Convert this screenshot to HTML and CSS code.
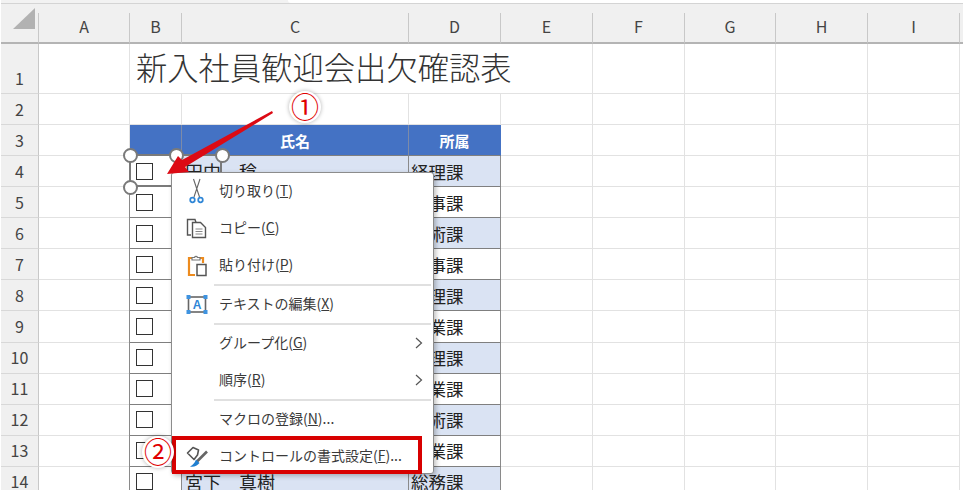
FILE: index.html
```html
<!DOCTYPE html>
<html lang="ja">
<head>
<meta charset="utf-8">
<title>新入社員歓迎会出欠確認表</title>
<link rel="stylesheet" href="styles.css">
</head>
<body>
<div class="page">
  <div class="strip"><div class="tab"></div></div>
  <div class="gap"><div class="corner-tri"></div></div>
  <div class="sheet">
    <div class="ch corner"></div><div class="ch">A</div><div class="ch">B</div><div class="ch">C</div><div class="ch">D</div><div class="ch">E</div><div class="ch">F</div><div class="ch">G</div><div class="ch">H</div><div class="ch">I</div><div class="ch end"></div>

    <div class="rh low">1</div><div class="c"></div><div class="c title">新入社員歓迎会出欠確認表</div><div class="c"></div><div class="c"></div><div class="c"></div><div class="c"></div><div class="fill"></div>

    <div class="rh">2</div><div class="c"></div><div class="c"></div><div class="c"></div><div class="c"></div><div class="c"></div><div class="c"></div><div class="c"></div><div class="c"></div><div class="c"></div><div class="fill"></div>

    <div class="rh">3</div><div class="c"></div><div class="c th th-first"></div><div class="c th">氏名</div><div class="c th th-end">所属</div><div class="c"></div><div class="c"></div><div class="c"></div><div class="c"></div><div class="c"></div><div class="fill"></div>

    <div class="rh">4</div><div class="c"></div><div class="c tb first"><span class="box"></span></div><div class="c tb band name">田中　稔</div><div class="c tb band">経理課</div><div class="c"></div><div class="c"></div><div class="c"></div><div class="c"></div><div class="c"></div><div class="fill"></div>

    <div class="rh">5</div><div class="c"></div><div class="c tb first"><span class="box"></span></div><div class="c tb"></div><div class="c tb">人事課</div><div class="c"></div><div class="c"></div><div class="c"></div><div class="c"></div><div class="c"></div><div class="fill"></div>

    <div class="rh">6</div><div class="c"></div><div class="c tb first"><span class="box"></span></div><div class="c tb band"></div><div class="c tb band">技術課</div><div class="c"></div><div class="c"></div><div class="c"></div><div class="c"></div><div class="c"></div><div class="fill"></div>

    <div class="rh">7</div><div class="c"></div><div class="c tb first"><span class="box"></span></div><div class="c tb"></div><div class="c tb">人事課</div><div class="c"></div><div class="c"></div><div class="c"></div><div class="c"></div><div class="c"></div><div class="fill"></div>

    <div class="rh">8</div><div class="c"></div><div class="c tb first"><span class="box"></span></div><div class="c tb band"></div><div class="c tb band">経理課</div><div class="c"></div><div class="c"></div><div class="c"></div><div class="c"></div><div class="c"></div><div class="fill"></div>

    <div class="rh">9</div><div class="c"></div><div class="c tb first"><span class="box"></span></div><div class="c tb"></div><div class="c tb">営業課</div><div class="c"></div><div class="c"></div><div class="c"></div><div class="c"></div><div class="c"></div><div class="fill"></div>

    <div class="rh">10</div><div class="c"></div><div class="c tb first"><span class="box"></span></div><div class="c tb band"></div><div class="c tb band">経理課</div><div class="c"></div><div class="c"></div><div class="c"></div><div class="c"></div><div class="c"></div><div class="fill"></div>

    <div class="rh">11</div><div class="c"></div><div class="c tb first"><span class="box"></span></div><div class="c tb"></div><div class="c tb">営業課</div><div class="c"></div><div class="c"></div><div class="c"></div><div class="c"></div><div class="c"></div><div class="fill"></div>

    <div class="rh">12</div><div class="c"></div><div class="c tb first"><span class="box"></span></div><div class="c tb band"></div><div class="c tb band">技術課</div><div class="c"></div><div class="c"></div><div class="c"></div><div class="c"></div><div class="c"></div><div class="fill"></div>

    <div class="rh">13</div><div class="c"></div><div class="c tb first"><span class="box"></span></div><div class="c tb"></div><div class="c tb">営業課</div><div class="c"></div><div class="c"></div><div class="c"></div><div class="c"></div><div class="c"></div><div class="fill"></div>

    <div class="rh">14</div><div class="c"></div><div class="c tb first"><span class="box"></span></div><div class="c tb band name">宮下　真樹</div><div class="c tb band">総務課</div><div class="c"></div><div class="c"></div><div class="c"></div><div class="c"></div><div class="c"></div><div class="fill"></div>
  </div>

  <div class="selection">
    <span class="handle h-tl"></span><span class="handle h-tm"></span><span class="handle h-tr"></span><span class="handle h-bl"></span>
  </div>

  <div class="menu">
    <div class="item">
      <span class="ico"><svg viewBox="0 0 24 28" width="24" height="28"><path d="M8.5 1 L14.5 19 M15 1 L9 19" fill="none" stroke="#666" stroke-width="1.1"/><circle cx="7.5" cy="22" r="2.3" fill="none" stroke="#2f86d6" stroke-width="1.7"/><circle cx="15.5" cy="22" r="2.3" fill="none" stroke="#2f86d6" stroke-width="1.7"/></svg></span>
      <span class="label">切り取り(<u>T</u>)</span>
    </div>
    <div class="item">
      <span class="ico"><svg viewBox="0 0 24 22" width="24" height="22"><path d="M6 17 H2.5 V1.5 H10 L11 4.5" fill="none" stroke="#555" stroke-width="1.4"/><path d="M7.5 4.5 H15.5 L20.5 9.5 V19.5 H7.5 Z" fill="#fff" stroke="#555" stroke-width="1.4"/><path d="M10.5 11 H17.5 M10.5 13.5 H17.5 M10.5 16 H17.5" stroke="#888" stroke-width="1"/></svg></span>
      <span class="label">コピー(<u>C</u>)</span>
    </div>
    <div class="item">
      <span class="ico"><svg viewBox="0 0 24 24" width="24" height="24"><path d="M7 4 H4 V21 H10" fill="none" stroke="#ed8b1e" stroke-width="2.2"/><path d="M15 4 H18 V9" fill="none" stroke="#ed8b1e" stroke-width="2.2"/><path d="M7 6 V3.5 H9.5 A1.6 1.6 0 0 1 12.5 3.5 H15 V6 Z" fill="#fff" stroke="#777" stroke-width="1.2"/><rect x="12" y="10.5" width="9" height="11" fill="#fff" stroke="#555" stroke-width="1.5"/></svg></span>
      <span class="label">貼り付け(<u>P</u>)</span>
    </div>
    <div class="sep"></div>
    <div class="item">
      <span class="ico"><svg viewBox="0 0 24 22" width="24" height="22"><rect x="3.5" y="3" width="17" height="15" fill="#fff" stroke="#666" stroke-width="1.6"/><rect x="1.5" y="1" width="4" height="4" fill="#3f93e0"/><rect x="18.5" y="1" width="4" height="4" fill="#3f93e0"/><rect x="1.5" y="16" width="4" height="4" fill="#3f93e0"/><rect x="18.5" y="16" width="4" height="4" fill="#3f93e0"/><text x="12" y="15" class="ico-a">A</text></svg></span>
      <span class="label">テキストの編集(<u>X</u>)</span>
    </div>
    <div class="sep"></div>
    <div class="item">
      <span class="ico"></span>
      <span class="label">グループ化(<u>G</u>)</span>
      <svg class="chev" viewBox="0 0 8 12" width="8" height="12"><path d="M1 1 L6.5 6 L1 11" fill="none" stroke="#555" stroke-width="1.2"/></svg>
    </div>
    <div class="item">
      <span class="ico"></span>
      <span class="label">順序(<u>R</u>)</span>
      <svg class="chev" viewBox="0 0 8 12" width="8" height="12"><path d="M1 1 L6.5 6 L1 11" fill="none" stroke="#555" stroke-width="1.2"/></svg>
    </div>
    <div class="sep"></div>
    <div class="item">
      <span class="ico"></span>
      <span class="label">マクロの登録(<u>N</u>)...</span>
    </div>
    <div class="item">
      <span class="ico"><svg viewBox="0 0 24 22" width="24" height="22"><path d="M2.5 7 L8 1.5 L13.5 4 L12.5 9 L9 13.5 Z" fill="#fff" stroke="#555" stroke-width="1.6" stroke-linejoin="round"/><path d="M22 5.5 L12 15.5" stroke="#666" stroke-width="2.6"/><path d="M11 13.5 L14.5 17 Q11 21.5 5 20.5 Q9.5 18 11 13.5 Z" fill="#1f7fd0"/></svg></span>
      <span class="label">コントロールの書式設定(<u>F</u>)...</span>
    </div>
    <div class="redbox"></div>
  </div>

  <svg class="arrow" viewBox="0 0 963 490" width="963" height="490"><polygon points="272,111 182,160 178,156 167,174 189,172 185,167 273,113" fill="#dc0a14"/></svg>
  <div class="badge b1">①</div>
  <div class="badge b2">②</div>
</div>
</body>
</html>
```

FILE: styles.css
```css
* { box-sizing: border-box; }
html, body { margin: 0; padding: 0; }
body { width: 963px; height: 490px; overflow: hidden; background: #fff; font-family: "Noto Sans CJK JP", "Noto Sans", sans-serif; }

.page { position: relative; width: 963px; height: 490px; overflow: hidden; }

.strip { height: 4px; margin-left: 1px; background: #f2f2f2; border-bottom: 1px solid #d4d4d4; position: relative; }
.tab { position: absolute; left: 287px; right: 0; top: 0; height: 3px; background: #fff; border-radius: 0 0 0 4px; }
.gap { height: 9px; margin-left: 1px; background: #f0f0f0; position: relative; }
.corner-tri { position: absolute; left: 12px; top: 4px; width: 22px; height: 21px; background: #b2b2b2; clip-path: polygon(100% 0, 100% 100%, 0 100%); z-index: 1; }

.sheet {
  display: grid;
  margin-left: 1px;
  grid-template-columns: 38px 91px 52px 227px 92px 92px 92px 91px 92px 92px 3px;
  grid-template-rows: 31px 50px 31px 31px repeat(11, 31.1px);
}

.ch { background: #f0f0f0; border-right: 1px solid #c8c8c8; border-bottom: 2px solid #b4b4b4; display: flex; align-items: center; justify-content: center; font-size: 16px; color: #444; padding-bottom: 4px; }
.ch.end { border-right: 0; }
.rh { background: #f0f0f0; border-right: 1px solid #c8c8c8; border-bottom: 1px solid #d8d8d8; display: flex; align-items: center; justify-content: center; font-size: 16px; color: #444; padding-bottom: 1px; }
.rh.low { align-items: flex-end; padding-bottom: 3px; }

.c { border-right: 1px solid #e2e2e2; border-bottom: 1px solid #e2e2e2; min-width: 0; white-space: nowrap; font-size: 17.5px; color: #222; display: flex; align-items: center; }
.fill { background: #fff; }

.title { grid-column: span 4; font-size: 31.3px; padding-left: 6px; padding-bottom: 4px; color: #333; font-weight: 300; }

.th { background: #4472c4; color: #fff; font-weight: 700; font-size: 15px; justify-content: center; border-right: 1px solid #7d8ba8; border-bottom-color: #7f7f7f; }
.th-end { border-right-color: #4472c4; }

.tb { border-right: 1px solid #8a8a8a; border-bottom: 1px solid #7f7f7f; padding-left: 2px; }
.tb.first { box-shadow: -1px 0 0 #8a8a8a; }
.tb.band { background: #dae3f3; }
.name { padding-left: 3px; font-size: 18px; }

.box { display: block; width: 17px; height: 17px; margin-left: 4px; border: 1.5px solid #333; background: #fff; }

.selection { position: absolute; left: 129px; top: 154px; width: 93px; height: 33px; border: 2px solid #7a7a7a; }
.handle { position: absolute; width: 15px; height: 15px; border-radius: 50%; background: #fff; border: 2.5px solid #7a7a7a; }
.h-tl { left: -8px; top: -8px; }
.h-tm { left: 38px; top: -8px; }
.h-tr { left: 84px; top: -8px; }
.h-bl { left: -8px; top: 24px; }

.menu { position: absolute; left: 171px; top: 172px; width: 263px; height: 302px; background: #fff; border: 1px solid #8c8c8c; border-radius: 3px; box-shadow: 2px 2px 5px rgba(0,0,0,.25); }
.item { display: flex; align-items: center; height: 37px; color: #3a3a3a; font-size: 14px; position: relative; }
.ico { width: 47px; padding-left: 13px; display: flex; align-items: center; flex: none; }
.ico-a { font: 700 12px "Liberation Sans", sans-serif; fill: #2f86d6; text-anchor: middle; }
.label { white-space: nowrap; padding-bottom: 4px; }
.sep { height: 2px; margin-left: 42px; margin-right: 2px; background: #e0e0e0; }
.chev { position: absolute; right: 10px; top: 12px; }
.redbox { position: absolute; left: 0; top: 263px; width: 250px; height: 38px; border: 4px solid #d80000; }

.arrow { position: absolute; left: 0; top: 0; pointer-events: none; }

.badge { position: absolute; width: 32px; height: 32px; border-radius: 50%; background: #fff; box-shadow: 0 0 4px rgba(0,0,0,.3); color: #e00000; font-size: 28px; line-height: 31px; text-align: center; }
.b1 { left: 289px; top: 91px; }
.b2 { left: 142px; top: 436px; }
```
